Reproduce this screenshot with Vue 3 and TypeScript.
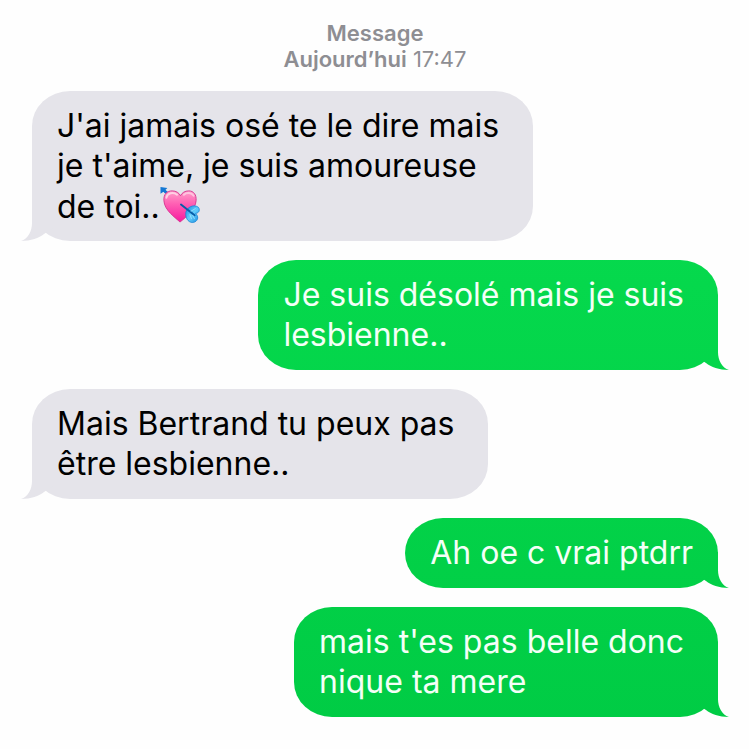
<script setup lang="ts">
interface Message {
  id: number
  side: 'received' | 'sent'
  lines: string[]
  heart?: boolean
}

const messages: Message[] = [
  {
    id: 1,
    side: 'received',
    lines: ["J'ai jamais osé te le dire mais", "je t'aime, je suis amoureuse", 'de toi..'],
    heart: true,
  },
  { id: 2, side: 'sent', lines: ['Je suis désolé mais je suis', 'lesbienne..'] },
  { id: 3, side: 'received', lines: ['Mais Bertrand tu peux pas', 'être lesbienne..'] },
  { id: 4, side: 'sent', lines: ['Ah oe c vrai ptdrr'] },
  { id: 5, side: 'sent', lines: ["mais t'es pas belle donc", 'nique ta mere'] },
]
</script>

<template>
  <main class="conversation">
    <header class="stamp">
      <div class="strong">Message</div>
      <div><span class="strong">Aujourd’hui</span> <time>17:47</time></div>
    </header>
    <ol class="thread">
      <li
        v-for="m in messages"
        :key="m.id"
        class="bubble"
        :class="[m.side, { multi: m.lines.length > 1 }]"
      >
        <span v-for="(line, i) in m.lines" :key="i" class="line"
          >{{ line
          }}<svg
            v-if="m.heart && i === m.lines.length - 1"
            class="heart"
            viewBox="0 0 42 40"
            role="img"
            aria-label="💘"
          >
            <defs>
              <linearGradient id="pink" x1="0" y1="0" x2="0" y2="1">
                <stop offset="0" stop-color="#ff9fca" />
                <stop offset="0.4" stop-color="#ff62b4" />
                <stop offset="1" stop-color="#f7189f" />
              </linearGradient>
              <linearGradient id="feather" x1="0" y1="0" x2="1" y2="1">
                <stop offset="0" stop-color="#1687dc" />
                <stop offset="0.5" stop-color="#63cdfb" />
                <stop offset="1" stop-color="#168be0" />
              </linearGradient>
            </defs>
            <path d="M4 4 L10 9" stroke="#1b78cf" stroke-width="2.5" />
            <path d="M1 1 L8 2 L6 4 L9 7 L6 8 L4 6 L1 8 Z" fill="#1478d4" />
            <path
              d="M21 37 C16 32 5 25 4.500 15 C4 8 8 5 13 5 C17 5 20 7 21.500 10 C23 7 26 5 30 5 C35 5 38 9 37.500 15 C37 24 27 32 21 37 Z"
              fill="url(#pink)"
              stroke="#d93a92"
              stroke-width="1"
            />
            <path d="M7 12 C8 7 14 6 18 9" fill="none" stroke="#ffd0e4" stroke-width="2" stroke-linecap="round" />
            <path d="M25 9 C28 6 33 7 35 10" fill="none" stroke="#ffc4df" stroke-width="2" stroke-linecap="round" />
            <path
              d="M27 27 C28 22 35 18 40 22 C42 25 40 28 37 28 C40 31 40 35 36 37 C31 39 26 34 27 27 Z"
              fill="url(#feather)"
              stroke="#1683d5"
              stroke-width="0.800"
            />
            <path d="M22 19 L36 30" stroke="#075da8" stroke-width="2" stroke-linecap="round" />
            <path d="M32 26 L37 23 M31 29 L33 34 M34 30 L36 34" stroke="#a8e7ff" stroke-width="0.800" />
          </svg></span
        >
        <span class="tail" aria-hidden="true"></span>
      </li>
    </ol>
  </main>
</template>

<style>
body {
  background: #fefefe;
}
</style>

<style scoped>
.conversation {
  padding: 20px 31px 32px 32px;
  font-family: Inter, 'Liberation Sans', sans-serif;
}

.stamp {
  text-align: center;
  font-size: 22px;
  line-height: 26px;
  color: #8e8e93;
}

.strong {
  font-weight: 600;
}

.thread {
  list-style: none;
  margin: 19px 0 0;
  padding: 0;
  display: flex;
  flex-direction: column;
  align-items: flex-start;
  gap: 19px;
}

.bubble {
  position: relative;
  padding: 15px 25px;
  border-radius: 38px / 35px;
  font-size: 32px;
  line-height: 40px;
}

.bubble.multi {
  padding-right: 34px;
}

.received {
  color: #000;
}

.received,
.received .tail {
  background: #e5e4ea;
}

.sent {
  align-self: flex-end;
  color: #f4fff7;
}

.sent,
.sent .tail {
  background: linear-gradient(#08e051, #00cb44) fixed;
}

.line {
  display: block;
  height: 40px;
  white-space: nowrap;
}

.heart {
  width: 42px;
  height: 39px;
  margin-left: -1px;
  vertical-align: -7px;
}

.tail {
  position: absolute;
  bottom: 0;
  width: 34px;
  height: 36px;
}

.received .tail {
  left: -11px;
  clip-path: path('M11 0 V18 C11 26 7 34 0 36 C10 36 18 33 23 29 L34 22 V0 Z');
}

.sent .tail {
  right: -11px;
  clip-path: path('M23 0 V18 C23 26 27 34 34 36 C24 36 16 33 11 29 L0 22 V0 Z');
}
</style>
